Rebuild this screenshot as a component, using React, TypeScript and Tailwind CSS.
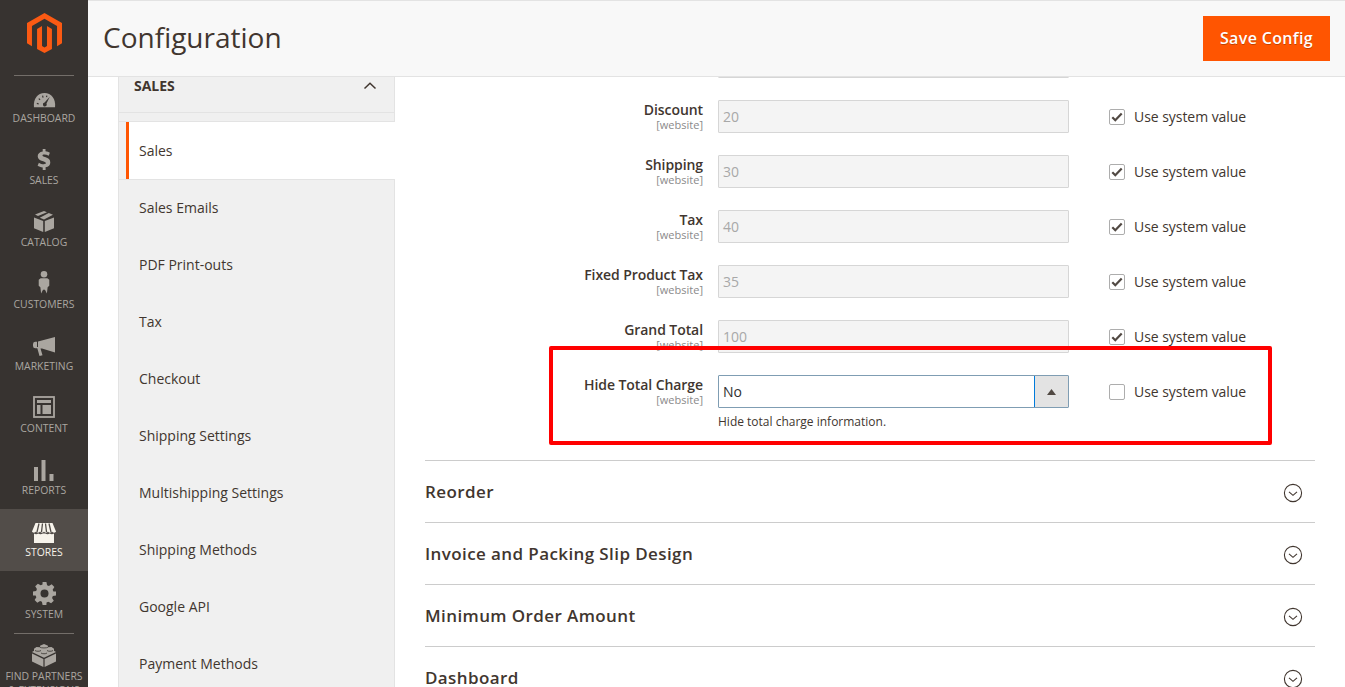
import React from "react";

const G = "#aaa6a0";
const D = "#373330";

const Logo = () => (
  <svg width="35" height="40" viewBox="0 0 24 27.4" className="block">
    <path fill="#fb5a13" d="M12 0 0 6.900v13.800l3.400 2V8.900L12 3.900l8.600 5v13.800l3.400-2V6.900z" />
    <path fill="#fb5a13" d="M13.700 22.600 12 23.600l-1.700-1V8.900L6.900 10.900v13.700l5.100 2.800 5.100-2.800V10.900l-3.400-2z" />
  </svg>
);

const icons: Record<string, React.ReactNode> = {
  dashboard: (
    <svg width="23" height="16" viewBox="0 0 24 16">
      <path fill={G} d="M1 15.500C0 7 5 .8 12 .8S24 7 23 15.500z" />
      <path stroke={D} strokeWidth="1.200" fill="none" d="M4 11.500l2 .6M6 6.500l1.400 1.200M10 3.500l.5 2M14.500 3.500l-.4 1.600" />
      <path fill={D} d="M17.500 4.500l-3.400 7.200a2 2 0 1 1-2-1z" />
    </svg>
  ),
  sales: (
    <svg width="14" height="21" viewBox="0 0 14 21">
      <path fill={G} d="M5.700 0h2.800v2.300c1.800.2 3.200.7 4.400 1.400l-1.200 3c-1.400-.8-3-1.300-4.400-1.300-1.200 0-1.800.4-1.800 1 0 .7.8 1 2.600 1.700 3.500 1.200 5.200 2.600 5.200 5.300 0 2.500-1.700 4.400-4.700 4.900V21H5.700v-2.500c-2-.2-3.900-.8-5.100-1.700l1.300-3.100c1.500 1 3.300 1.600 4.900 1.600 1.300 0 2-.4 2-1.200 0-.7-.7-1.100-2.700-1.800C2.800 11.200.7 10 .7 7.200c0-2.500 1.800-4.300 5-4.800z" />
    </svg>
  ),
  catalog: (
    <svg width="20" height="21" viewBox="0 0 20 21">
      <path fill={G} d="M0 6.500 9.200 10v11L0 17.200zM20 6.500 10.800 10v11l9.200-3.800zM10 0l3 1.200-9 3.700-3-1.300zM14.800 2 19 3.700 10 8.500 5.800 6.700z" />
    </svg>
  ),
  customers: (
    <svg width="12" height="23" viewBox="0 0 12 24">
      <circle cx="6" cy="3.400" r="3.400" fill={G} />
      <path fill={G} d="M2.500 7.500h7l2 1.500v6.500l-1.700 1.500-.8 6.500-2-4H5l-2 4-.8-6.500L.5 15.500V9z" />
    </svg>
  ),
  marketing: (
    <svg width="23" height="19" viewBox="0 0 23 19">
      <path fill={G} d="M22 0v15.500L9 11.500H7.500l2 6.800-3 .7L4.300 11.300H2.500A2.400 2.400 0 0 1 0 9V7a2.400 2.400 0 0 1 2.500-2.200H4V10h1V4.500z" />
    </svg>
  ),
  content: (
    <svg width="22" height="22" viewBox="0 0 22 22">
      <rect x="1" y="1" width="20" height="20" fill="none" stroke={G} strokeWidth="1.800" />
      <path fill={G} d="M4 4h14v3H4zM4 9h3.500v9H4zM9.500 9H18v9H9.500z" />
    </svg>
  ),
  reports: (
    <svg width="20" height="21" viewBox="0 0 20 21" className="translate-y-px">
      <path fill={G} d="M0 7h4v14H0zM7.500 0h4v21h-4zM15.500 14h4v7h-4z" />
    </svg>
  ),
  stores: (
    <svg width="24" height="20" viewBox="0 0 24 20" className="translate-y-px">
      <path fill="#f7f3eb" d="M2 10.500c1.200 1 3 1 4.200 0 1.300 1 3.200 1 4.600 0h2.400c1.400 1 3.300 1 4.600 0 1.200 1 3 1 4.200 0V20H2z" />
      <path fill="#f7f3eb" d="M3.500 0h17L24 8.500c-.6 1.500-3.200 1.500-4 0-.6 1.500-3.600 1.500-4 0-.6 1.500-3.400 1.500-4 0-.6 1.500-3.400 1.500-4 0-.6 1.500-3.400 1.500-4 0-.8 1.500-3.400 1.500-4 0z" />
      <path stroke="#524d49" strokeWidth="1.300" fill="none" d="M7 .5 5 9M10.500 .5 9.500 9M13.500 .5l1 8.500M17 .5l2 8.500" />
    </svg>
  ),
  system: (
    <svg width="23" height="23" viewBox="0 0 24 24" className="translate-y-px">
      <path fill={G} fillRule="evenodd" d="M10 0h4l.7 3.300 1.900.8 2.900-1.800 2.800 2.800-1.800 2.900.8 1.900L24 10v4l-3.300.7-.8 1.900 1.800 2.900-2.800 2.800-2.900-1.800-1.900.8L14 24h-4l-.7-3.300-1.900-.8-2.900 1.800-2.800-2.800 1.800-2.900-.8-1.900L0 14v-4l3.300-.7.8-1.900-1.800-2.900 2.800-2.800 2.900 1.800 1.900-.8zM12 7.800a4.200 4.200 0 1 0 0 8.400 4.200 4.200 0 0 0 0-8.400z" />
    </svg>
  ),
  partners: (
    <svg width="24" height="23" viewBox="0 0 24 23">
      <path fill={G} d="M0 9.500 11.400 15v8L0 17.500zM24 9.500 12.600 15v8L24 17.500z" />
      <path fill={G} d="M12 0l4 1.800v1.500l3.500-.3 2.500 1.800v2l2 1.200L12 13.800 0 8l2-1.200v-2L4.500 3 8 3.300V1.800z" />
      <path stroke={D} strokeWidth=".8" fill="none" d="M8 3.200c1 1 7 1 8 0M3 6.500c1 1 5 1 6 0M15 6.500c1 1 5 1 6 0M9 9c1 1 5 1 6 0" />
    </svg>
  ),
};

const nav = [
  ["dashboard", "DASHBOARD"],
  ["sales", "SALES"],
  ["catalog", "CATALOG"],
  ["customers", "CUSTOMERS"],
  ["marketing", "MARKETING"],
  ["content", "CONTENT"],
  ["reports", "REPORTS"],
  ["stores", "STORES"],
  ["system", "SYSTEM"],
];

const leftItems = [
  "Sales Emails",
  "PDF Print-outs",
  "Tax",
  "Checkout",
  "Shipping Settings",
  "Multishipping Settings",
  "Shipping Methods",
  "Google API",
  "Payment Methods",
];

const rows = [
  ["Discount", "20"],
  ["Shipping", "30"],
  ["Tax", "40"],
  ["Fixed Product Tax", "35"],
  ["Grand Total", "100"],
];

const Check = ({ checked }: { checked: boolean }) => (
  <span className="flex items-center gap-[9px] text-[14px] leading-[20px] tracking-[-0.05px] text-[#41362f]">
    <span className="flex h-[16px] w-[16px] items-center justify-center rounded-[2px] border border-[#adadad] bg-white">
      {checked && (
        <svg width="12" height="10" viewBox="0 0 12 10">
          <path d="M1.300 5.200 4.300 8.200 10.700 1.500" fill="none" stroke="#514943" strokeWidth="2.200" />
        </svg>
      )}
    </span>
    Use system value
  </span>
);

const Label = ({ text }: { text: string }) => (
  <div className="w-[278px] pt-[1px] text-right">
    <div className="text-[14px] font-semibold leading-[18px] tracking-[-0.08px] text-[#41362f]">{text}</div>
    <div className="text-[11px] leading-[12px] text-[#8a8a8a]">[website]</div>
  </div>
);

const Chevron = () => (
  <svg width="20" height="20" viewBox="0 0 20 20" className="mt-[2px]">
    <circle cx="10" cy="10" r="8.600" fill="none" stroke="#41362f" strokeWidth="1.100" />
    <path d="M6 8.800 10 12.300 14 8.800" fill="none" stroke="#41362f" strokeWidth="1.100" />
  </svg>
);

export default function App() {
  return (
    <div className="relative flex h-[687px] w-[1345px] overflow-hidden bg-white font-['Open_Sans',sans-serif]">
      <aside className="flex h-full w-[88px] shrink-0 flex-col bg-[#373330]">
        <div className="flex h-[75px] shrink-0 justify-center pt-[13px]">
          <Logo />
        </div>
        <div className="relative mx-[14px] -mb-px h-px shrink-0 bg-[#736e69]" />
        {nav.map(([k, label]) => (
          <div
            key={k}
            className={`flex h-[62px] shrink-0 flex-col items-center ${k === "stores" ? "bg-[#524d49] text-[#f7f3eb]" : "text-[#aaa6a0]"}`}
          >
            <div className="flex h-[36px] items-end justify-center pb-[3px]">{icons[k]}</div>
            <div className="text-[10.400px] leading-[15px]">{label}</div>
          </div>
        ))}
        <div className="mx-[14px] h-px shrink-0 bg-[#736e69]" />
        <div className="flex shrink-0 flex-col items-center text-[#aaa6a0]">
          <div className="mt-[10px] flex h-[23px] items-center">{icons.partners}</div>
          <div className="mt-[2px] whitespace-nowrap text-center text-[10.400px] leading-[14px]">
            FIND PARTNERS
            <br />& EXTENSIONS
          </div>
        </div>
      </aside>

      <div className="flex min-w-0 flex-1 flex-col">
        <header className="flex h-[77px] shrink-0 items-center justify-between border-t border-b border-t-[#e3e3e3] border-b-[#e3e3e3] bg-[#f8f8f8] pl-[15px] pr-[15px]">
          <h1 className="mb-[4px] text-[28px] font-normal leading-[36px] text-[#41362f]">Configuration</h1>
          <button className="flex h-[45px] w-[127px] items-center justify-center bg-[#ff5501] pb-[2px] text-[16px] font-semibold tracking-[0.35px] text-white [text-shadow:0_1px_0_rgba(0,0,0,0.25)]">
            Save Config
          </button>
        </header>

        <div className="flex min-h-0 flex-1 overflow-hidden">
          <nav className="ml-[30px] w-[277px] shrink-0 border-x border-[#e3e3e3] bg-[#f0f0f0]">
            <div className="flex h-[37px] items-start justify-between border-b border-[#e3e3e3] pl-[15px] pr-[17px] -mt-[1px]">
              <span className="text-[14px] font-bold leading-[20px] text-[#41362f]">SALES</span>
              <svg width="14" height="20" viewBox="0 0 14 20">
                <path d="M1.500 12.500 7 7.200 12.500 12.500" fill="none" stroke="#41362f" strokeWidth="1.500" />
              </svg>
            </div>
            <div className="mt-[8px] border-t border-[#e3e3e3]" />
            <div className="relative z-10 ml-[7px] mr-[-1px] flex h-[57px] items-center border-l-[3px] border-[#ff5501] bg-white pl-[10px] text-[14px] text-[#41362f]">
              Sales
            </div>
            <div className="border-t border-[#e3e3e3]" />
            {leftItems.map((t) => (
              <div key={t} className="flex h-[57px] items-center pb-[2px] pl-[20px] text-[14px] text-[#41362f]">
                {t}
              </div>
            ))}
          </nav>

          <main className="min-w-0 flex-1 px-[30px]">
            <div className="ml-[293px] -mt-[33px] mb-[22px] h-[34px] w-[351px] rounded-[1px] border border-[#d6d6d6] bg-[#f4f4f4]" />
            {rows.map(([label, value]) => (
              <div key={label} className="mb-[22px] flex h-[33px]">
                <Label text={label} />
                <div className="ml-[15px] flex h-[33px] w-[351px] items-center rounded-[1px] border border-[#d6d6d6] bg-[#f4f4f4] pl-[4px] text-[14px] text-[#a8a8a8]">
                  {value}
                </div>
                <div className="ml-[40px] flex items-center">
                  <Check checked />
                </div>
              </div>
            ))}
            <div className="flex">
              <Label text="Hide Total Charge" />
              <div className="ml-[15px] w-[351px]">
                <div className="flex h-[33px] rounded-[1px] border border-[#7f9db3] bg-white">
                  <div className="flex flex-1 items-center border-r border-[#007bdb] pl-[4px] text-[14px] text-[#303030]">No</div>
                  <div className="flex w-[33px] items-center justify-center bg-[#e3e3e3]">
                    <svg width="9" height="6" viewBox="0 0 9 6">
                      <path d="M4.500 0 9 6H0z" fill="#514943" />
                    </svg>
                  </div>
                </div>
                <div className="mt-[5px] text-[12px] leading-[17px] text-[#41362f]">Hide total charge information.</div>
              </div>
              <div className="ml-[40px] flex h-[33px] items-center">
                <Check checked={false} />
              </div>
            </div>

            <div className="mt-[30px]">
              {["Reorder", "Invoice and Packing Slip Design", "Minimum Order Amount", "Dashboard"].map((t) => (
                <div key={t} className="flex h-[62px] items-center justify-between border-t border-[#cccccc] pr-[12px]">
                  <span className="text-[17px] font-semibold tracking-[0.4px] text-[#41362f]">{t}</span>
                  <Chevron />
                </div>
              ))}
            </div>
          </main>
        </div>
      </div>

      <div className="pointer-events-none absolute left-[549px] top-[346px] h-[99px] w-[723px] rounded-[2px] border-[4px] border-[#ff0000]" />
    </div>
  );
}
